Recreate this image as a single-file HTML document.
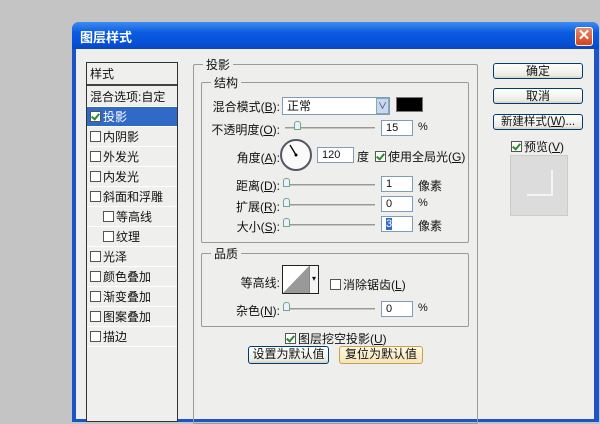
<!DOCTYPE html>
<html><head><meta charset="utf-8"><style>
*{margin:0;padding:0;box-sizing:border-box}
body{width:600px;height:409px;background:#c4c4c4;position:relative;overflow:hidden;font-family:"Liberation Sans","Noto Sans CJK SC",sans-serif;font-size:12px;color:#111}
.a{position:absolute}
.dlg{left:72px;top:22px;width:527px;height:400px;background:#1d52c8;border-radius:7px 7px 0 0}
.title{left:72px;top:22px;width:527px;height:27px;border-radius:7px 7px 0 0;background:linear-gradient(#3d8cf2,#0a5be0 40%,#0650d8 80%,#0a47b8)}
.body{left:76px;top:49px;width:518px;height:370px;background:#eeeeec}
.tt{left:80px;top:27px;color:#fff;font-weight:bold;font-size:13px}
.close{left:575px;top:27px;width:18px;height:19px;border:1px solid #fff;border-radius:3px;background:linear-gradient(#e88a6a,#d4431a);color:#fff;font-size:15px;line-height:16px;text-align:center;font-weight:bold}
.list{left:86px;top:62px;width:92px;height:360px;border:1px solid #333;background:#efefed}
.row{position:absolute;left:0;width:90px;height:20px;line-height:20px;border-bottom:1px solid #fff;font-size:12px}
.cb{display:inline-block;width:11px;height:11px;border:1px solid #555;background:#fff;vertical-align:-1px;margin-right:2px;position:relative}
.cb.on::after{content:"";position:absolute;left:2px;top:0px;width:3px;height:6px;border:solid #2a8a2a;border-width:0 2px 2px 0;transform:rotate(40deg)}
.grp{border:1px solid #9a9a9a;border-radius:2px}
.lg{background:#eeeeec;padding:0 3px;font-size:12px}
.inp{background:#fff;border:1px solid #7f9db9;height:16px;font-size:11px;line-height:14px;padding-left:4px}
.sl{height:2px;background:#c8c8c0;border-top:1px solid #999}
.th{width:7px;height:9px;border:1px solid #6a8;background:#eef;border-radius:3px 3px 0 0}
.btn{border:1px solid #003c74;border-radius:3px;background:linear-gradient(#fff,#ececE6 80%,#d6d0c5);text-align:center;font-size:12px;line-height:15px}
.lab{text-align:right;font-size:12px}
</style></head><body>
<div class="a dlg"></div>
<div class="a title"></div>
<div class="a body"></div>
<div class="a tt">图层样式</div>
<div class="a close">✕</div>

<div class="a list">
<div class="row" style="top:0;height:23px;line-height:22px;border-bottom:2px solid #444;padding-left:3px">样式</div>
<div class="row" style="top:24px;padding-left:3px">混合选项:自定</div>
<div class="row" style="top:44px;background:#3169c6;color:#fff;padding-left:3px"><span class="cb on"></span>投影</div>
<div class="row" style="top:64px;padding-left:3px"><span class="cb"></span>内阴影</div>
<div class="row" style="top:84px;padding-left:3px"><span class="cb"></span>外发光</div>
<div class="row" style="top:104px;padding-left:3px"><span class="cb"></span>内发光</div>
<div class="row" style="top:124px;padding-left:3px"><span class="cb"></span>斜面和浮雕</div>
<div class="row" style="top:144px;padding-left:16px"><span class="cb"></span>等高线</div>
<div class="row" style="top:164px;padding-left:16px"><span class="cb"></span>纹理</div>
<div class="row" style="top:184px;padding-left:3px"><span class="cb"></span>光泽</div>
<div class="row" style="top:204px;padding-left:3px"><span class="cb"></span>颜色叠加</div>
<div class="row" style="top:224px;padding-left:3px"><span class="cb"></span>渐变叠加</div>
<div class="row" style="top:244px;padding-left:3px"><span class="cb"></span>图案叠加</div>
<div class="row" style="top:264px;padding-left:3px"><span class="cb"></span>描边</div>
</div>

<div class="a grp" style="left:193px;top:64px;width:285px;height:360px"></div>
<div class="a lg" style="left:203px;top:56px">投影</div>
<div class="a grp" style="left:201px;top:82px;width:268px;height:161px"></div>
<div class="a lg" style="left:211px;top:74px">结构</div>

<div class="a lab" style="left:200px;top:98px;width:80px">混合模式(<u>B</u>):</div>
<div class="a inp" style="left:282px;top:97px;width:108px;height:18px;font-size:12px;line-height:16px">正常</div>
<div class="a" style="left:376px;top:98px;width:13px;height:16px;background:#c8d8f4;border:1px solid #8aa;color:#334;font-size:9px;text-align:center;line-height:15px">∨</div>
<div class="a" style="left:396px;top:97px;width:27px;height:15px;background:#000;border:1px solid #777"></div>

<div class="a lab" style="left:200px;top:121px;width:80px">不透明度(<u>O</u>):</div>
<div class="a sl" style="left:285px;top:127px;width:90px"></div>
<div class="a th" style="left:294px;top:121px"></div>
<div class="a inp" style="left:381px;top:120px;width:32px">15</div>
<div class="a" style="left:418px;top:121px;font-size:11px">%</div>

<div class="a lab" style="left:200px;top:149px;width:80px">角度(<u>A</u>):</div>
<div class="a" style="left:280px;top:139px;width:32px;height:32px;border-radius:50%;border:2px solid #556;background:#fafafa"></div>
<svg class="a" style="left:280px;top:139px" width="32" height="32"><line x1="16" y1="16" x2="10" y2="6" stroke="#000" stroke-width="1.3"/><circle cx="16" cy="16" r="1.5"/></svg>
<div class="a inp" style="left:317px;top:147px;width:37px">120</div>
<div class="a" style="left:357px;top:148px">度</div>
<div class="a" style="left:375px;top:148px"><span class="cb on"></span>使用全局光(<u>G</u>)</div>

<div class="a lab" style="left:200px;top:177px;width:80px">距离(<u>D</u>):</div>
<div class="a sl" style="left:285px;top:184px;width:90px"></div>
<div class="a th" style="left:283px;top:178px"></div>
<div class="a inp" style="left:381px;top:176px;width:32px">1</div>
<div class="a" style="left:418px;top:177px">像素</div>

<div class="a lab" style="left:200px;top:198px;width:80px">扩展(<u>R</u>):</div>
<div class="a sl" style="left:285px;top:204px;width:90px"></div>
<div class="a th" style="left:283px;top:198px"></div>
<div class="a inp" style="left:381px;top:196px;width:32px">0</div>
<div class="a" style="left:418px;top:197px;font-size:11px">%</div>

<div class="a lab" style="left:200px;top:218px;width:80px">大小(<u>S</u>):</div>
<div class="a sl" style="left:285px;top:224px;width:90px"></div>
<div class="a th" style="left:283px;top:218px"></div>
<div class="a inp" style="left:381px;top:216px;width:32px"><span style="background:#316ac5;color:#fff">3</span></div>
<div class="a" style="left:418px;top:217px">像素</div>

<div class="a grp" style="left:201px;top:253px;width:268px;height:74px"></div>
<div class="a lg" style="left:211px;top:245px">品质</div>
<div class="a lab" style="left:200px;top:274px;width:80px">等高线:</div>
<div class="a" style="left:282px;top:265px;width:37px;height:29px;border:1px solid #222;background:#fff"></div>
<svg class="a" style="left:283px;top:266px" width="26" height="27"><polygon points="0,27 26,0 26,27" fill="#999"/></svg>
<div class="a" style="left:309px;top:266px;width:9px;height:27px;border-left:1px solid #888;background:#f4f4f4;font-size:8px;text-align:center;line-height:25px">▾</div>
<div class="a" style="left:330px;top:276px"><span class="cb"></span>消除锯齿(<u>L</u>)</div>
<div class="a lab" style="left:200px;top:302px;width:80px">杂色(<u>N</u>):</div>
<div class="a sl" style="left:285px;top:308px;width:90px"></div>
<div class="a th" style="left:283px;top:302px"></div>
<div class="a inp" style="left:381px;top:301px;width:32px">0</div>
<div class="a" style="left:418px;top:302px;font-size:11px">%</div>

<div class="a" style="left:285px;top:330px"><span class="cb on"></span>图层挖空投影(<u>U</u>)</div>
<div class="a btn" style="left:248px;top:346px;width:81px;height:18px">设置为默认值</div>
<div class="a btn" style="left:339px;top:346px;width:84px;height:18px;border-color:#c9a050;background:linear-gradient(#fff8e0,#f4e4b8)">复位为默认值</div>

<div class="a btn" style="left:493px;top:63px;width:90px;height:16px">确定</div>
<div class="a btn" style="left:493px;top:88px;width:90px;height:16px">取消</div>
<div class="a btn" style="left:493px;top:114px;width:90px;height:16px;font-size:11.5px">新建样式(<u>W</u>)...</div>
<div class="a" style="left:511px;top:138px"><span class="cb on"></span>预览(<u>V</u>)</div>
<div class="a" style="left:510px;top:155px;width:58px;height:61px;background:#dcdcdc;border:1px solid #ccc"></div>
<div class="a" style="left:527px;top:170px;width:26px;height:26px;border-right:2px solid #f4f4f4;border-bottom:2px solid #f4f4f4"></div>
</body></html>
